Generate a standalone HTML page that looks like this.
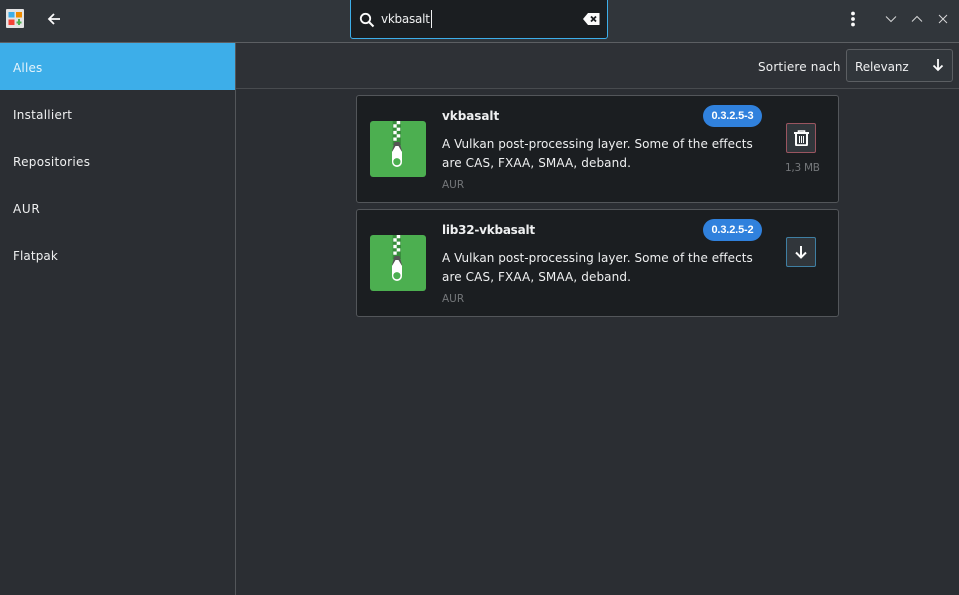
<!DOCTYPE html>
<html><head><meta charset="utf-8"><style>
html,body{margin:0;padding:0;width:959px;height:595px;overflow:hidden;background:#2b2e33}
*{box-sizing:border-box}
.a{position:absolute}
.t{position:absolute;font-family:"DejaVu Sans","Liberation Sans",sans-serif;font-size:12px;color:#eff0f1;white-space:nowrap;line-height:16px}
svg{position:absolute;display:block}
.card{position:absolute;left:356px;width:483px;height:108px;background:#1b1e21;border:1px solid #53565a;border-radius:3px}
.badge{position:absolute;left:703px;width:59px;height:22px;border-radius:11px;background:#3081dd;color:#fff;font:bold 11px/22px "Liberation Sans",sans-serif;text-align:center;letter-spacing:-.15px}
</style></head><body>
<div class="a" style="left:0;top:0;width:959px;height:42px;background:#31363b"></div>
<div class="a" style="left:0;top:42px;width:959px;height:1px;background:#5c5f63"></div>
<div class="a" style="left:235px;top:43px;width:1px;height:552px;background:#53565a"></div>
<div class="a" style="left:236px;top:43px;width:723px;height:46px;background:#2e3136"></div>
<div class="a" style="left:236px;top:88px;width:723px;height:1px;background:#484b4f"></div>
<div class="a" style="left:0;top:43px;width:235px;height:47px;background:#3daee9"></div>

<svg style="left:6px;top:9px" width="18" height="19" viewBox="0 0 18 19"><rect width="18" height="19" rx="1" fill="#e4e4e4"/><rect x="2.500" y="3" width="6" height="5.500" fill="#3daee9"/><rect x="10" y="3" width="6" height="5.500" fill="#f08c00"/><rect x="2.500" y="10.500" width="6" height="5.500" fill="#f44336"/><path d="M13 10v6M10.500 13.500h5" stroke="#4caf50" stroke-width="2"/></svg>
<svg style="left:46px;top:11px" width="16" height="16" viewBox="0 0 16 16"><path d="M14 8H3M8 3L3 8l5 5" fill="none" stroke="#fcfcfc" stroke-width="1.800"/></svg>

<div class="a" style="left:350px;top:-3px;width:258px;height:42px;background:#1b1e21;border:1px solid #3daee9;border-radius:3px"></div>
<svg style="left:359px;top:12px" width="16" height="16" viewBox="0 0 16 16"><circle cx="6.500" cy="6.500" r="4.700" fill="none" stroke="#fcfcfc" stroke-width="1.800"/><path d="M10 10l4.500 4.500" stroke="#fcfcfc" stroke-width="2"/></svg>
<div class="t" style="left:381px;top:11px;letter-spacing:-.25px">vkbasalt</div>
<div class="a" style="left:431px;top:10px;width:1px;height:18px;background:#eff0f1"></div>
<svg style="left:583px;top:12px" width="17" height="14" viewBox="0 0 17 14"><path d="M5 1h11.500v12H5L0 7z" fill="#fcfcfc"/><path d="M8 4.500l5 5M13 4.500l-5 5" stroke="#1b1e21" stroke-width="1.800"/></svg>

<svg style="left:850px;top:11px" width="6" height="16"><circle cx="3" cy="2.500" r="1.900" fill="#fcfcfc"/><circle cx="3" cy="8" r="1.900" fill="#fcfcfc"/><circle cx="3" cy="13.500" r="1.900" fill="#fcfcfc"/></svg>
<svg style="left:885px;top:14px" width="12" height="10"><path d="M1 2.500l5 5 5-5" fill="none" stroke="#d5d6d7" stroke-width="1"/></svg>
<svg style="left:911px;top:14px" width="12" height="10"><path d="M1 7.500l5-5 5 5" fill="none" stroke="#d5d6d7" stroke-width="1"/></svg>
<svg style="left:937px;top:14px" width="12" height="10"><path d="M2 1l8 8M10 1l-8 8" fill="none" stroke="#d5d6d7" stroke-width="1"/></svg>

<div class="t" style="left:13px;top:60px;color:#e4f3fb;letter-spacing:.2px">Alles</div>
<div class="t" style="left:13px;top:107px;letter-spacing:.25px">Installiert</div>
<div class="t" style="left:13px;top:154px;letter-spacing:.3px">Repositories</div>
<div class="t" style="left:13px;top:201px;letter-spacing:.7px">AUR</div>
<div class="t" style="left:13px;top:248px;letter-spacing:.1px">Flatpak</div>

<div class="t" style="left:758px;top:59px;letter-spacing:.18px">Sortiere nach</div>
<div class="a" style="left:846px;top:49px;width:107px;height:33px;background:#31363b;border:1px solid #5c5f63;border-radius:3px"></div>
<div class="t" style="left:855px;top:59px;letter-spacing:-.08px">Relevanz</div>
<svg style="left:931px;top:58px" width="14" height="14" viewBox="0 0 14 14"><path d="M7 1v11M2.500 7.500L7 12l4.500-4.500" fill="none" stroke="#fcfcfc" stroke-width="1.800"/></svg>

<div class="card" style="top:95px"></div>
<div class="card" style="top:209px"></div>

<div class="a" style="left:370px;top:121px;width:56px;height:56px;background:#4caf50;border-radius:3px"></div>
<svg style="left:370px;top:121px" width="56" height="56" viewBox="0 0 56 56"><rect x="22.700" y="0" width="8.300" height="24" fill="#388e3c"/><path d="M26.700 0h3.600v3.300h-3.600zM23.300 3.300h3.400v3.300h-3.400zM26.700 6.600h3.600v3.300h-3.600zM23.300 9.900h3.400v3.300h-3.400zM26.700 13.200h3.600v3.300h-3.600zM23.300 16.500h3.400v3.300h-3.400z" fill="#fff"/><path d="M24.500 21h5l2.500 9H22z" fill="#555"/><path d="M25.500 25h3L32 31V41a5 5 0 0 1-10 0V31z" fill="#fff"/><circle cx="26.900" cy="40.700" r="3.600" fill="#4caf50"/></svg>
<div class="a" style="left:370px;top:235px;width:56px;height:56px;background:#4caf50;border-radius:3px"></div>
<svg style="left:370px;top:235px" width="56" height="56" viewBox="0 0 56 56"><rect x="22.700" y="0" width="8.300" height="24" fill="#388e3c"/><path d="M26.700 0h3.600v3.300h-3.600zM23.300 3.300h3.400v3.300h-3.400zM26.700 6.600h3.600v3.300h-3.600zM23.300 9.900h3.400v3.300h-3.400zM26.700 13.200h3.600v3.300h-3.600zM23.300 16.500h3.400v3.300h-3.400z" fill="#fff"/><path d="M24.500 21h5l2.500 9H22z" fill="#555"/><path d="M25.500 25h3L32 31V41a5 5 0 0 1-10 0V31z" fill="#fff"/><circle cx="26.900" cy="40.700" r="3.600" fill="#4caf50"/></svg>

<div class="t" style="left:442px;top:108px;font-weight:bold;letter-spacing:-.05px">vkbasalt</div>
<div class="t" style="left:442px;top:136px;letter-spacing:.04px">A Vulkan post-processing layer. Some of the effects</div>
<div class="t" style="left:442px;top:155px;letter-spacing:.11px">are CAS, FXAA, SMAA, deband.</div>
<div class="t" style="left:442px;top:177px;font-size:10.500px;color:#74777a">AUR</div>
<div class="badge" style="top:105px">0.3.2.5-3</div>

<div class="t" style="left:442px;top:222px;font-weight:bold;letter-spacing:-.23px">lib32-vkbasalt</div>
<div class="t" style="left:442px;top:250px;letter-spacing:.04px">A Vulkan post-processing layer. Some of the effects</div>
<div class="t" style="left:442px;top:269px;letter-spacing:.11px">are CAS, FXAA, SMAA, deband.</div>
<div class="t" style="left:442px;top:291px;font-size:10.500px;color:#74777a">AUR</div>
<div class="badge" style="top:219px">0.3.2.5-2</div>

<div class="a" style="left:786px;top:123px;width:30px;height:30px;background:#31363b;border:1px solid #9a5560;border-radius:2px"></div>
<svg style="left:794px;top:130px" width="15" height="16" viewBox="0 0 15 16"><path d="M0 3h15" stroke="#fcfcfc" stroke-width="2"/><path d="M4.500 2.500V1h6v1.500" fill="none" stroke="#fcfcfc" stroke-width="1.600"/><path d="M2 3v11.500a.8.8 0 0 0 .8.8h9.400a.8.8 0 0 0 .8-.8V3" fill="none" stroke="#fcfcfc" stroke-width="2"/><path d="M5.500 6v7M7.500 6v7M9.500 6v7" stroke="#fcfcfc" stroke-width="1"/></svg>
<div class="t" style="left:785px;top:160px;font-size:10.500px;color:#74777a;letter-spacing:-.27px">1,3 MB</div>

<div class="a" style="left:786px;top:237px;width:30px;height:30px;background:#31363b;border:1px solid #3f7fa3;border-radius:2px"></div>
<svg style="left:794px;top:245px" width="14" height="14" viewBox="0 0 14 14"><path d="M7 1v11M2 7.500L7 12.500l5-5" fill="none" stroke="#fcfcfc" stroke-width="2"/></svg>
</body></html>
